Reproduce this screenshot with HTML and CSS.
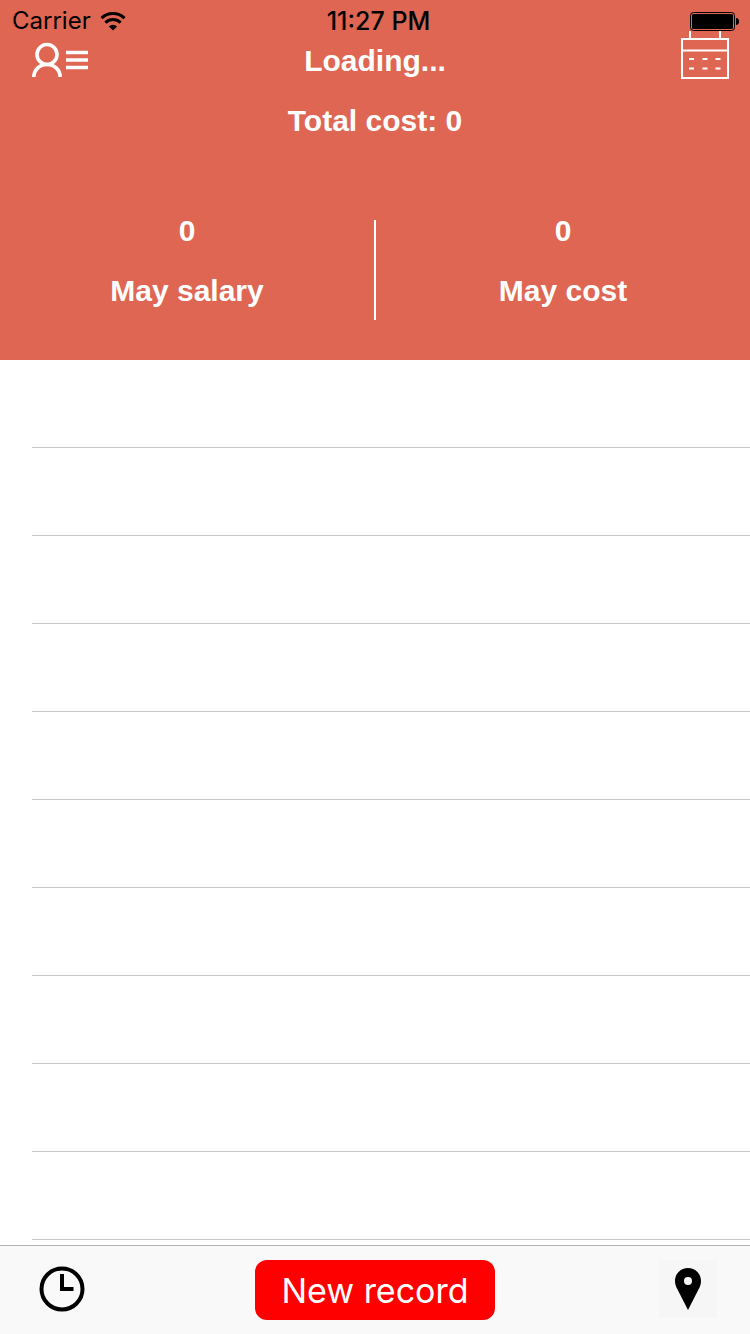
FILE: index.html
```html
<!DOCTYPE html>
<html lang="en">
<head>
<meta charset="utf-8">
<meta name="viewport" content="width=device-width, initial-scale=1">
<title>Total cost</title>
<link rel="stylesheet" href="styles.css">
</head>
<body>
<div class="app">
  <header class="header">
    <div class="status">
      <div class="carrier">
        <span>Carrier</span>
        <svg width="26" height="20" viewBox="0 0 26 20" fill="none" stroke="#000">
          <path d="M1.5 7.2A16.5 16.5 0 0 1 24.5 7.2" stroke-width="3"/>
          <path d="M5.400 11.600A11 11 0 0 1 20.600 11.600" stroke-width="3"/>
          <path d="M13 19.500L8.900 15.400A5.800 5.800 0 0 1 17.100 15.400Z" fill="#000" stroke="none"/>
        </svg>
      </div>
      <time class="time">11:27 PM</time>
      <svg class="battery" width="49" height="20" viewBox="0 0 49 20">
        <rect x="0.5" y="1.5" width="44" height="18" rx="3" fill="none" stroke="#000"/>
        <rect x="2" y="3" width="41" height="15" rx="1.5"/>
        <path d="M46 7c2 0 3 1.500 3 3.500s-1 3.500-3 3.500z"/>
      </svg>
    </div>
    <div class="nav">
      <button class="icon-button profile" type="button" aria-label="Profile menu">
        <svg width="60" height="36" viewBox="0 0 60 36" fill="none" stroke="#fff" stroke-width="3.600">
          <circle cx="17" cy="12.500" r="10"/>
          <path d="M3.800 35C3.800 28 9.500 22.500 17 22.500S30.200 28 30.200 35"/>
          <path d="M36 10.500h22M36 18h22M36 25.500h22"/>
        </svg>
      </button>
      <h1 class="label">Loading...</h1>
      <button class="icon-button calendar" type="button" aria-label="Calendar">
        <svg width="48" height="48" viewBox="0 0 48 48" fill="none" stroke="#fff" stroke-width="2">
          <path d="M1 8h46v39H1zM1 19.500h46M9 0v8M39 0v8"/>
          <path d="M8 28h5M21.500 28h5M34.500 28h5M8 37.500h5M21.500 37.500h5M34.500 37.500h5"/>
        </svg>
      </button>
    </div>
    <p class="label">Total cost: 0</p>
    <div class="summary">
      <div class="stat"><p class="label">0</p><p class="label">May salary</p></div>
      <div class="divider"></div>
      <div class="stat"><p class="label">0</p><p class="label">May cost</p></div>
    </div>
  </header>
  <main class="list">
    <div class="row"></div><div class="row"></div><div class="row"></div><div class="row"></div><div class="row"></div>
    <div class="row"></div><div class="row"></div><div class="row"></div><div class="row"></div><div class="row"></div>
  </main>
  <footer class="toolbar">
    <button class="icon-button tool" type="button" aria-label="History">
      <svg width="46" height="46" viewBox="0 0 46 46" fill="none" stroke="#000" stroke-width="4">
        <circle cx="23" cy="23" r="20.500"/>
        <path d="M23 8v15h11.500"/>
      </svg>
    </button>
    <button class="new-record" type="button">New record</button>
    <button class="icon-button tool tool-place" type="button" aria-label="Places">
      <svg width="26" height="42" viewBox="0 0 26 42">
        <path fill-rule="evenodd" d="M13 0C5.800 0 0 5.800 0 13c0 3 1 5.500 2 7.500L13 42l11-21.500c1-2 2-4.500 2-7.500C26 5.800 20.200 0 13 0zM13 9a4 4 0 1 1 0 8 4 4 0 0 1 0-8z"/>
      </svg>
    </button>
  </footer>
</div>
</body>
</html>
```
FILE: styles.css
```css
* {
  box-sizing: border-box;
}

body {
  margin: 0;
  background: #fff;
  font-family: Inter, "Liberation Sans", sans-serif;
}

button {
  border: 0;
  padding: 0;
  background: none;
}

svg {
  display: block;
}

.app {
  display: flex;
  flex-direction: column;
  min-height: 100vh;
}

.header {
  padding-bottom: 40px;
  background: #de6652;
  color: #fff;
}

.status {
  display: grid;
  grid-template-columns: 1fr auto 1fr;
  align-items: center;
  height: 30px;
  padding: 10px 11px 0 12px;
  color: #000;
  font-size: 24px;
  line-height: 22px;
}

.carrier {
  display: flex;
  align-items: center;
  gap: 9px;
}

.time {
  padding-left: 6px;
  font-size: 25px;
  font-weight: 500;
}

.battery {
  justify-self: end;
}

.nav {
  display: grid;
  grid-template-columns: 1fr auto 1fr;
  align-items: center;
  height: 60px;
  padding: 0 21px 0 30px;
}

.nav .label {
  padding-right: 9px;
}

.profile {
  justify-self: start;
}

.calendar {
  align-self: start;
  justify-self: end;
  padding-top: 1px;
}

.label {
  height: 60px;
  margin: 0;
  font-family: "Liberation Sans", Arial, sans-serif;
  font-size: 30px;
  font-weight: 700;
  line-height: 62px;
  text-align: center;
}

.summary {
  display: flex;
  align-items: flex-end;
  padding-top: 50px;
}

.stat {
  flex: 1;
}

.divider {
  width: 2px;
  height: 100px;
  background: #fff;
}

.list {
  flex: 1;
}

.row {
  height: 88px;
  margin-left: 32px;
  border-bottom: 1px solid #c8c7cc;
}

.toolbar {
  display: flex;
  align-items: flex-start;
  justify-content: space-between;
  padding: 14px 33px;
  border-top: 1px solid #b2b2b2;
  background: #f9f9f9;
}

.tool {
  display: grid;
  place-items: center;
  width: 58px;
  height: 58px;
}

.tool-place {
  background: #f6f6f6;
}

.new-record {
  width: 240px;
  height: 60px;
  border-radius: 12px;
  background: #f00;
  color: #fff;
  font-family: Inter, "Liberation Sans", sans-serif;
  font-size: 34px;
}
```
